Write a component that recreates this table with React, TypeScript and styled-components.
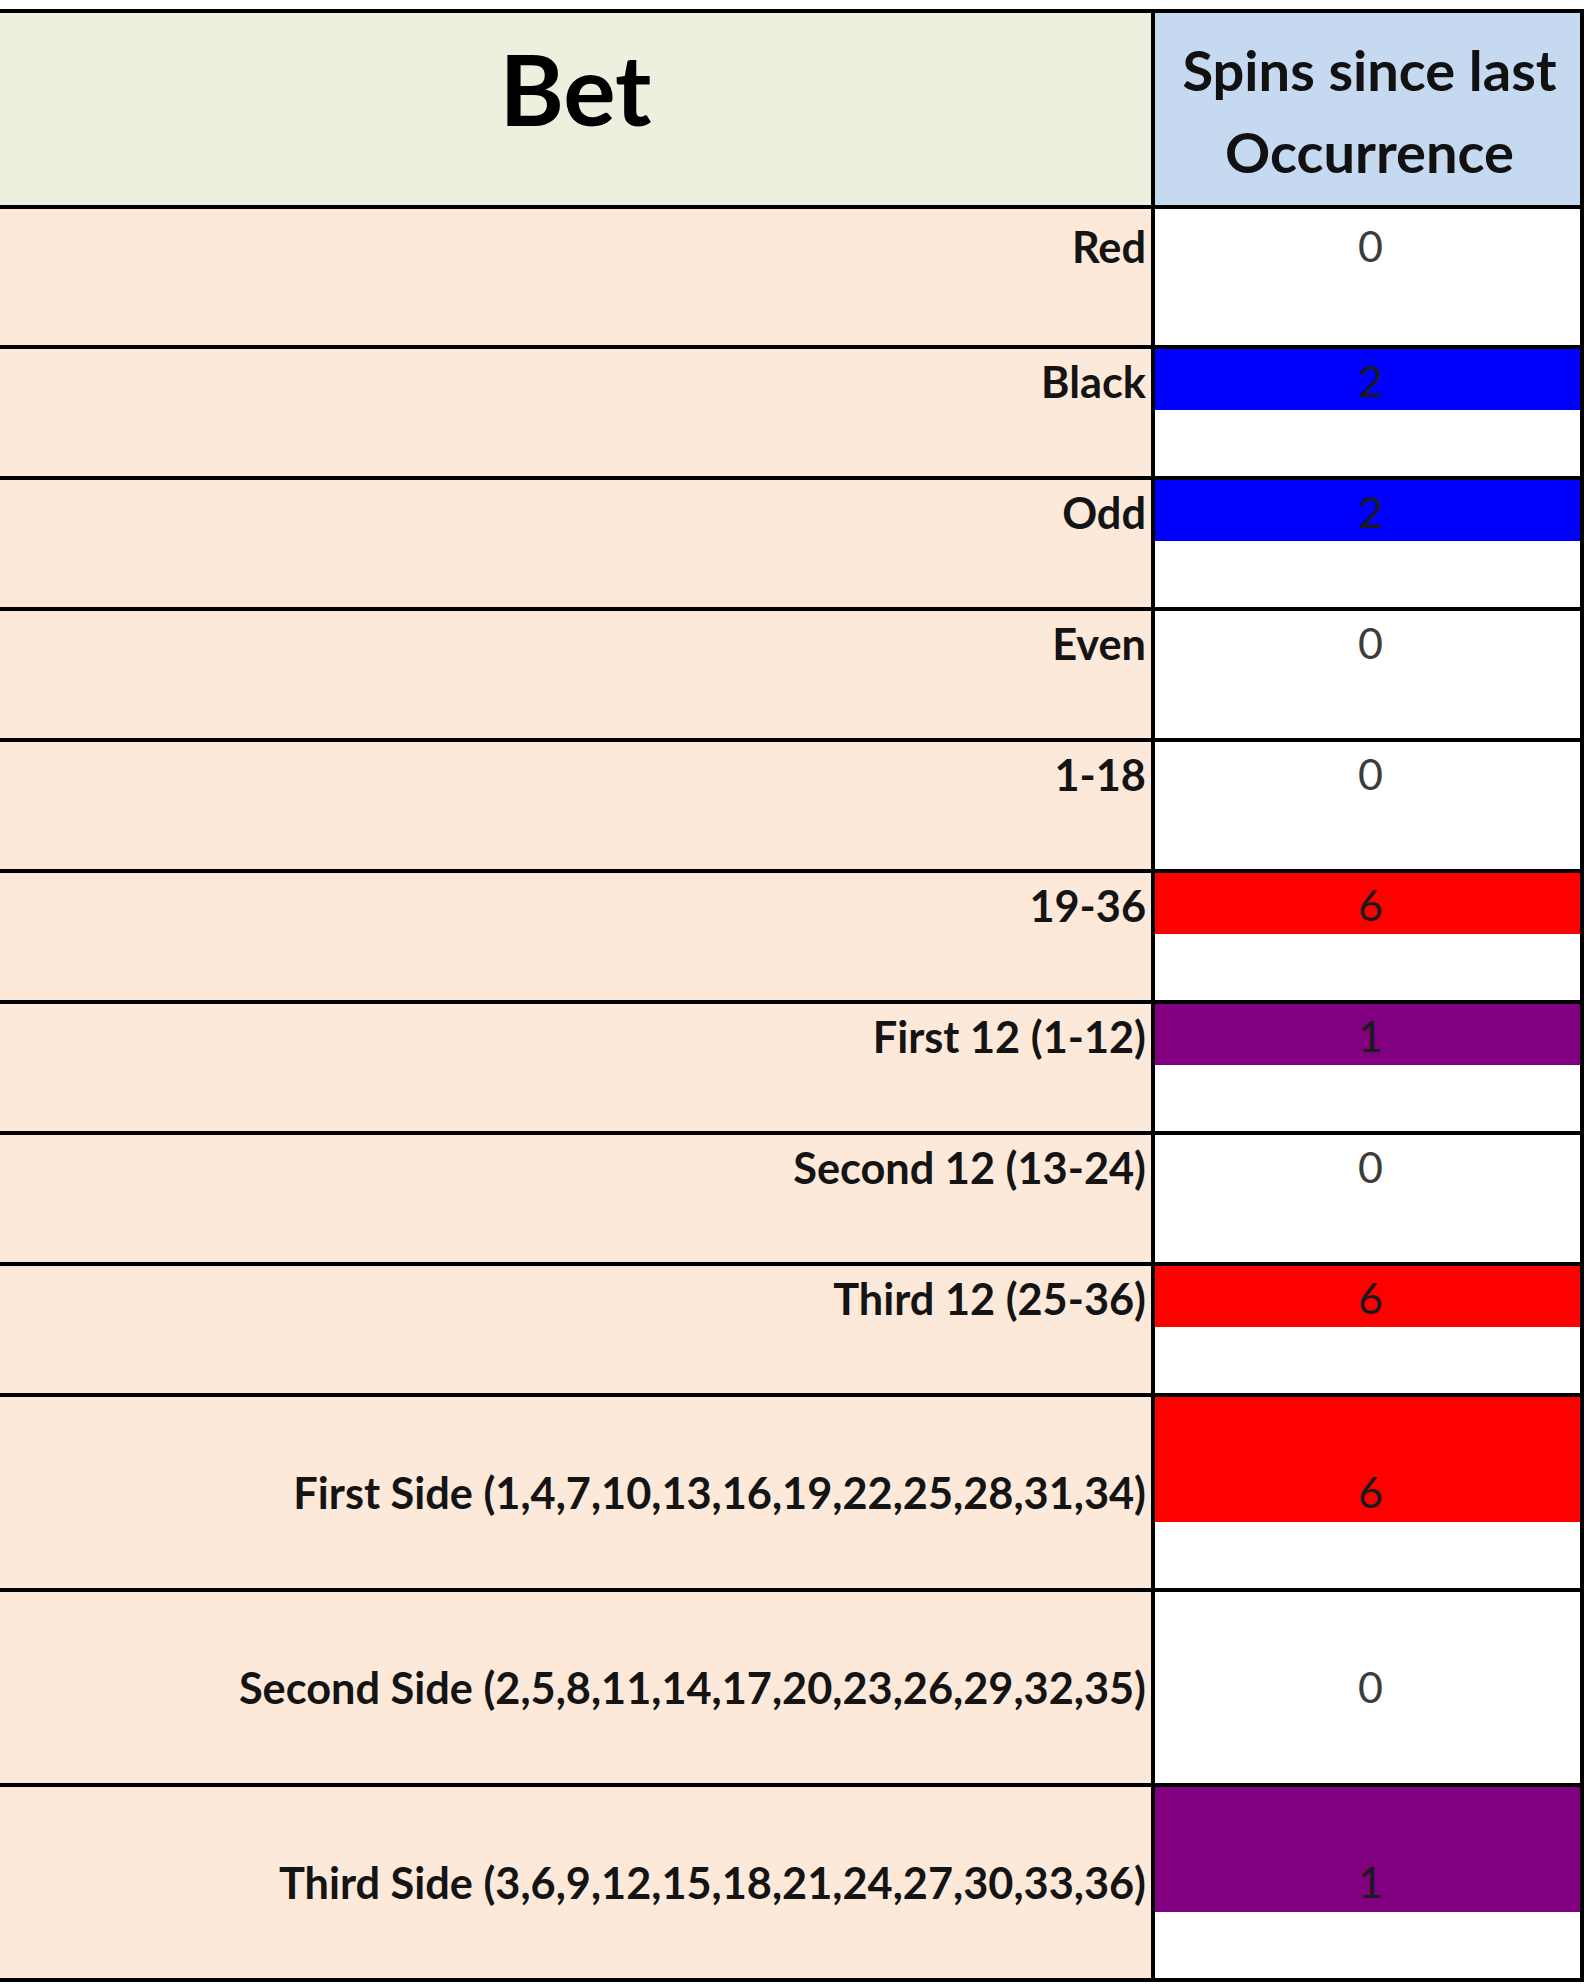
import React from 'react';
import styled, { createGlobalStyle } from 'styled-components';

type Tone = 'none' | 'blue' | 'red' | 'purple';

interface Bet {
  label: string;
  value: number;
  tone?: Tone;
  size?: 'first' | 'normal' | 'tall';
}

const bets: Bet[] = [
  { label: 'Red', value: 0, size: 'first' },
  { label: 'Black', value: 2, tone: 'blue' },
  { label: 'Odd', value: 2, tone: 'blue' },
  { label: 'Even', value: 0 },
  { label: '1-18', value: 0 },
  { label: '19-36', value: 6, tone: 'red' },
  { label: 'First 12 (1-12)', value: 1, tone: 'purple' },
  { label: 'Second 12 (13-24)', value: 0 },
  { label: 'Third 12 (25-36)', value: 6, tone: 'red' },
  { label: 'First Side (1,4,7,10,13,16,19,22,25,28,31,34)', value: 6, tone: 'red', size: 'tall' },
  { label: 'Second Side (2,5,8,11,14,17,20,23,26,29,32,35)', value: 0, size: 'tall' },
  { label: 'Third Side (3,6,9,12,15,18,21,24,27,30,33,36)', value: 1, tone: 'purple', size: 'tall' },
];

const toneColors: Record<Tone, string> = {
  none: '#ffffff',
  blue: '#0000ff',
  red: '#ff0000',
  purple: '#800080',
};

// coloured top band and full row height (without the border) per row size
const sizes = {
  first: { band: 70, row: 136, lift: 7 },
  normal: { band: 61, row: 127, lift: 3 },
  tall: { band: 125, row: 191, lift: 4 },
};

const GlobalStyle = createGlobalStyle`
  html, body {
    margin: 0;
    padding: 0;
    background: #ffffff;
  }
  body {
    font-family: Lato, "Liberation Sans", sans-serif;
  }
`;

const Sheet = styled.div`
  width: 1584px;
  margin-top: 9px;
  border-top: 4px solid #000;
  border-right: 4px solid #000;
  box-sizing: border-box;
`;

const HeaderRow = styled.div`
  display: flex;
  height: 192px;
  border-bottom: 4px solid #000;
`;

const BetHeader = styled.div`
  width: 1155px;
  flex-shrink: 0;
  box-sizing: border-box;
  border-right: 4px solid #000;
  background: #ebf1de;
  display: flex;
  justify-content: center;
  align-items: flex-start;
  padding-top: 17px;
  font-weight: 700;
  font-size: 98px;
  line-height: 1.2;
  color: #000;
`;

const SpinsHeader = styled.div`
  flex: 1;
  background: #c5d9f1;
  padding: 16px 0 0 4px;
  text-align: center;
  font-weight: 700;
  font-size: 56px;
  line-height: 82px;
  color: #111;
`;

const Row = styled.div<{ $height: number }>`
  display: flex;
  height: ${p => p.$height}px;
  border-bottom: 4px solid #000;
`;

const LabelCell = styled.div`
  width: 1155px;
  flex-shrink: 0;
  box-sizing: border-box;
  border-right: 4px solid #000;
  background: #fde9d9;
  display: flex;
  justify-content: flex-end;
  align-items: flex-start;
  padding-right: 5px;
  font-weight: 700;
  font-size: 43.3px;
  line-height: 52px;
  color: #141414;
  white-space: nowrap;
`;

const LabelText = styled.span<{ $top: number }>`
  margin-top: ${p => p.$top}px;
`;

const ValueColumn = styled.div`
  flex: 1;
  display: flex;
  flex-direction: column;
`;

const ValueBand = styled.div<{ $tone: Tone; $height: number; $lift: number }>`
  height: ${p => p.$height}px;
  flex-shrink: 0;
  box-sizing: border-box;
  background: ${p => toneColors[p.$tone]};
  display: flex;
  justify-content: center;
  align-items: flex-end;
  padding: 0 0 ${p => p.$lift}px 6px;
  font-size: 43px;
  line-height: 52px;
  color: ${p => (p.$tone === 'none' ? '#3c3c3c' : '#1a1a1a')};
`;

const ValueFoot = styled.div`
  flex: 1;
  background: #ffffff;
`;

export default function App() {
  return (
    <>
      <GlobalStyle />
      <Sheet>
        <HeaderRow>
          <BetHeader>Bet</BetHeader>
          <SpinsHeader>
            Spins since last
            <br />
            Occurrence
          </SpinsHeader>
        </HeaderRow>
        {bets.map(bet => {
          const size = sizes[bet.size ?? 'normal'];
          return (
            <Row key={bet.label} $height={size.row}>
              <LabelCell>
                <LabelText $top={size.band - size.lift - 52}>{bet.label}</LabelText>
              </LabelCell>
              <ValueColumn>
                <ValueBand $tone={bet.tone ?? 'none'} $height={size.band} $lift={size.lift}>
                  {bet.value}
                </ValueBand>
                <ValueFoot />
              </ValueColumn>
            </Row>
          );
        })}
      </Sheet>
    </>
  );
}
